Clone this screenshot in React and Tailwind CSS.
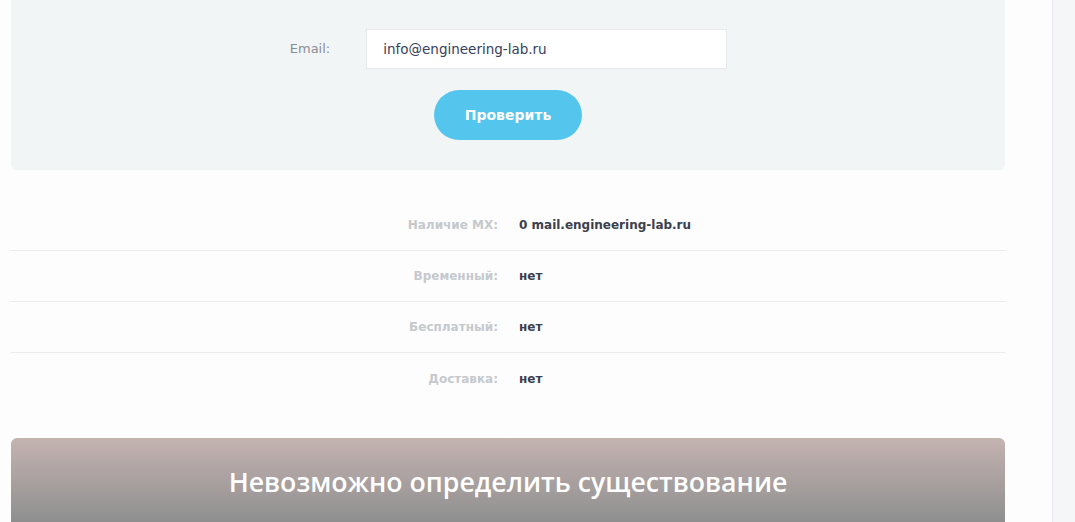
import React from "react";

const rows = [
  { label: "Наличие MX:", value: "0 mail.engineering-lab.ru" },
  { label: "Временный:", value: "нет" },
  { label: "Бесплатный:", value: "нет" },
  { label: "Доставка:", value: "нет" },
];

const App = () => {
  return (
    <div
      className="flex h-[522px] w-[1075px] overflow-hidden bg-[#fdfdfd]"
      style={{ fontFamily: '"DejaVu Sans", "Open Sans", sans-serif' }}
    >
      <div className="flex w-[1052px] flex-col pl-[11px] pr-[47px]">
        {/* check form */}
        <div className="flex flex-col items-center rounded-b-md bg-[#f2f5f6] pt-[29px] pb-[30px]">
          <div className="flex items-center pl-[1px]">
            <label className="text-[13px] text-[#8a8d91]">Email:</label>
            <input
              readOnly
              value="info@engineering-lab.ru"
              className="ml-[36px] h-[40px] w-[361px] border border-[#e6eaec] bg-white px-[16px] text-[13.5px] text-[#38405a] outline-none"
            />
          </div>
          <button className="mt-[21px] h-[50px] w-[148px] rounded-full bg-[#54c5ec] text-[14px] font-bold text-white">
            Проверить
          </button>
        </div>

        {/* results */}
        <div className="mt-[30px] flex flex-col">
          {rows.map((r, i) => (
            <div
              key={r.label}
              className={`flex h-[51px] items-center ${
                i < rows.length - 1 ? "border-b border-[#ebebeb]" : ""
              }`}
            >
              <div className="w-[487px] text-right text-[12px] font-bold text-[#c5c9cd]">
                {r.label}
              </div>
              <div className="pl-[21px] text-[12px] font-bold text-[#3b404c]">
                {r.value}
              </div>
            </div>
          ))}
        </div>

        {/* status banner */}
        <div className="mt-[34px] flex h-[120px] justify-center rounded-t-md bg-gradient-to-b from-[#c4b3b1] to-[#8f8f8f] pt-[24px]">
          <h2
            className="text-[26.7px] font-semibold text-white"
            style={{ fontFamily: '"Open Sans", "DejaVu Sans", sans-serif' }}
          >
            Невозможно определить существование
          </h2>
        </div>
      </div>

      <div className="w-[23px] border-l border-[#e6e8eb] bg-[#f5f6f8]" />
    </div>
  );
};

export default App;
